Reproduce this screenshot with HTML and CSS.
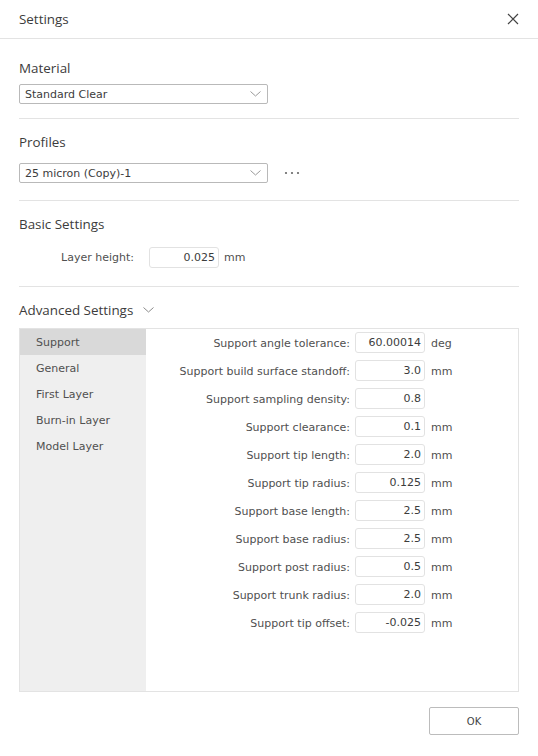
FILE: index.html
```html
<!DOCTYPE html>
<html>
<head>
<meta charset="utf-8">
<link rel="stylesheet" href="styles.css">
</head>
<body>
<div class="dialog">
  <div class="header">
    <span class="title">Settings</span>
    <svg class="close" width="12" height="12" viewBox="0 0 12 12"><path d="M1 1L11 11M11 1L1 11" stroke="#444" stroke-width="1.2" fill="none"/></svg>
  </div>
  <div class="body">
    <div class="section sec-material">
      <div class="heading">Material</div>
      <div class="select-row">
        <div class="select"><span>Standard Clear</span>
          <svg class="chev" width="11" height="6" viewBox="0 0 11 6"><path d="M0.5 0.5L5.5 5L10.5 0.5" stroke="#9a9a9a" stroke-width="1" fill="none"/></svg>
        </div>
      </div>
    </div>
    <div class="section sec-profiles">
      <div class="heading">Profiles</div>
      <div class="select-row">
        <div class="select"><span>25 micron (Copy)-1</span>
          <svg class="chev" width="11" height="6" viewBox="0 0 11 6"><path d="M0.5 0.5L5.5 5L10.5 0.5" stroke="#9a9a9a" stroke-width="1" fill="none"/></svg>
        </div>
        <svg class="dots" width="16" height="4" viewBox="0 0 16 4"><circle cx="2" cy="2" r="1.1" fill="#666"/><circle cx="8" cy="2" r="1.1" fill="#666"/><circle cx="14" cy="2" r="1.1" fill="#666"/></svg>
      </div>
    </div>
    <div class="section sec-basic">
      <div class="heading">Basic Settings</div>
      <div class="basic-grid">
        <span class="lbl">Layer height:</span>
        <span class="inp">0.025</span>
        <span class="unit">mm</span>
      </div>
    </div>
    <div class="section sec-adv">
      <div class="heading adv-heading">Advanced Settings
        <svg class="chev2" width="11" height="6" viewBox="0 0 11 6"><path d="M0.5 0.5L5.5 5L10.5 0.5" stroke="#8a8a8a" stroke-width="1" fill="none"/></svg>
      </div>
      <div class="panel">
        <ul class="side">
          <li class="active">Support</li>
          <li>General</li>
          <li>First Layer</li>
          <li>Burn-in Layer</li>
          <li>Model Layer</li>
        </ul>
        <div class="form">
          <span class="lbl">Support angle tolerance:</span><span class="inp">60.00014</span><span class="unit">deg</span>
          <span class="lbl">Support build surface standoff:</span><span class="inp">3.0</span><span class="unit">mm</span>
          <span class="lbl">Support sampling density:</span><span class="inp">0.8</span><span class="unit"></span>
          <span class="lbl">Support clearance:</span><span class="inp">0.1</span><span class="unit">mm</span>
          <span class="lbl">Support tip length:</span><span class="inp">2.0</span><span class="unit">mm</span>
          <span class="lbl">Support tip radius:</span><span class="inp">0.125</span><span class="unit">mm</span>
          <span class="lbl">Support base length:</span><span class="inp">2.5</span><span class="unit">mm</span>
          <span class="lbl">Support base radius:</span><span class="inp">2.5</span><span class="unit">mm</span>
          <span class="lbl">Support post radius:</span><span class="inp">0.5</span><span class="unit">mm</span>
          <span class="lbl">Support trunk radius:</span><span class="inp">2.0</span><span class="unit">mm</span>
          <span class="lbl">Support tip offset:</span><span class="inp">-0.025</span><span class="unit">mm</span>
        </div>
      </div>
    </div>
    <div class="footer">
      <button class="ok">OK</button>
    </div>
  </div>
</div>
</body>
</html>
```
FILE: styles.css
```css
html, body {
  margin: 0;
  padding: 0;
  background: #fff;
}
body {
  font-family: "DejaVu Sans", Verdana, sans-serif;
  font-size: 11px;
  color: #505050;
}
.dialog {
  width: 538px;
  height: 756px;
  display: flex;
  flex-direction: column;
}
.header {
  height: 38px;
  border-bottom: 1px solid #e3e3e3;
  display: flex;
  align-items: center;
  justify-content: space-between;
  padding: 0 19px;
}
.title, .heading {
  font-family: "Open Sans", "Noto Sans", sans-serif;
  font-size: 13.4px;
  color: #3c3c3c;
}
.close {
  display: block;
}
.body {
  padding: 0 19px;
  display: flex;
  flex-direction: column;
}
.section {
  border-bottom: 1px solid #e3e3e3;
}
.heading {
  line-height: 18px;
}
.sec-material { padding: 20px 0 14px; }
.sec-material .select-row { margin-top: 7px; }
.sec-profiles { padding: 14px 0 17px; }
.sec-profiles .select-row { margin-top: 12px; }
.sec-basic { padding: 14px 0 18px; }
.sec-basic .basic-grid { margin-top: 14px; }
.sec-adv { padding: 14px 0 0; border-bottom: none; }
.select-row {
  display: flex;
  align-items: center;
  gap: 16px;
}
.select {
  width: 249px;
  box-sizing: border-box;
  height: 20px;
  border: 1px solid #b9b9b9;
  border-radius: 2px;
  display: flex;
  align-items: center;
  justify-content: space-between;
  padding: 0 6px 0 5px;
  color: #3c3c3c;
}
.chev { display: block; }
.dots { display: block; }
.basic-grid {
  display: grid;
  grid-template-columns: 115px 70px auto;
  column-gap: 15px;
  align-items: center;
}
.basic-grid .unit { margin-left: -11px; }
.lbl {
  text-align: right;
  white-space: nowrap;
}
.inp {
  box-sizing: border-box;
  height: 21px;
  border: 1px solid #e2e2e2;
  border-radius: 3px;
  text-align: right;
  padding-right: 3px;
  line-height: 19px;
  color: #3c3c3c;
}
.unit { white-space: nowrap; padding-left: 1px; }
.adv-heading {
  display: flex;
  align-items: center;
  gap: 10px;
}
.panel {
  margin-top: 9px;
  height: 364px;
  box-sizing: border-box;
  border: 1px solid #e3e3e3;
  display: flex;
}
.side {
  list-style: none;
  margin: 0;
  padding: 0;
  width: 126px;
  background: #efefef;
  flex: none;
}
.side li {
  height: 26px;
  line-height: 27px;
  padding-left: 16px;
}
.side li.active {
  background: #d9d9d9;
}
.form {
  padding-top: 3px;
  display: grid;
  grid-template-columns: 204px 70px auto;
  column-gap: 5px;
  row-gap: 7px;
  align-content: start;
  align-items: center;
}
.form .lbl, .form .unit { padding-top: 1px; }
.footer {
  display: flex;
  justify-content: flex-end;
  margin-top: 15px;
}
.ok {
  width: 90px;
  height: 28px;
  background: #fff;
  border: 1px solid #bcbcbc;
  border-radius: 2px;
  font-family: "DejaVu Sans", sans-serif;
  font-size: 10px;
  color: #444;
}
```
